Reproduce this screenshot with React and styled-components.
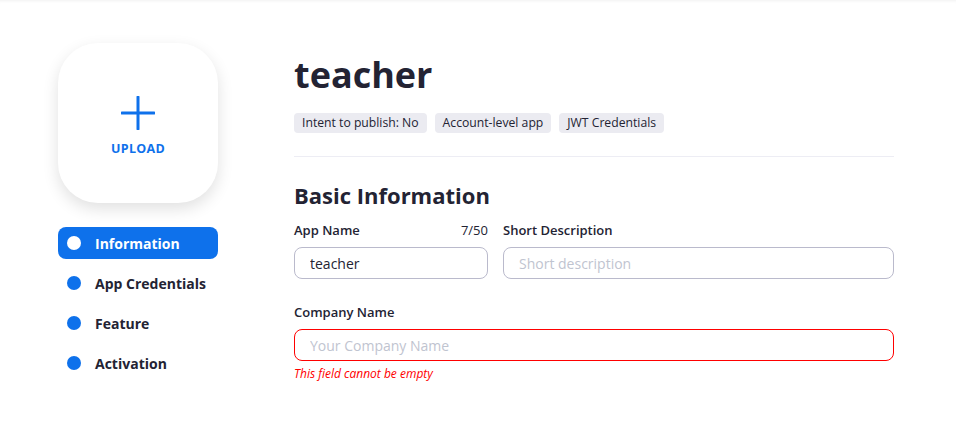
import React from 'react'
import styled, { createGlobalStyle } from 'styled-components'

const GlobalStyle = createGlobalStyle`
    body {
        margin:0;
        background:#fff;
        font-family:"Open Sans", "Liberation Sans", sans-serif;
        color:#232333;
    }
`

const Page = styled.div`
    min-height:422px;
    box-shadow: inset 0 3px 3px -2px rgba(0,0,0,0.06);
    display:flex;
    padding:43px 0 0 58px;
    box-sizing:border-box;
`

const Sidebar = styled.div`
    width:160px;
    display:flex;
    flex-direction:column;
`

const UploadCard = styled.div`
    width:160px;
    height:160px;
    border-radius:40px;
    background:#fff;
    box-shadow:0 6px 16px rgba(0,0,0,0.12);
    display:flex;
    flex-direction:column;
    align-items:center;
    justify-content:center;
    gap:10px;
    padding-top:6px;
    box-sizing:border-box;
    color:#0e71eb;
    cursor:pointer;
`

const UploadText = styled.span`
    font-size:12.5px;
    font-weight:700;
    letter-spacing:0.3px;
`

const Nav = styled.ul`
    list-style:none;
    margin:24px 0 0;
    padding:0;
    display:flex;
    flex-direction:column;
    gap:8px;
`

const NavItem = styled.li`
    height:32px;
    border-radius:8px;
    display:flex;
    align-items:center;
    gap:14px;
    padding-left:9px;
    font-size:14px;
    font-weight:700;
    background:${p => (p.active ? '#0e71eb' : 'transparent')};
    color:${p => (p.active ? '#fff' : '#232333')};
`

const Dot = styled.span`
    width:14px;
    height:14px;
    border-radius:50%;
    background:${p => (p.active ? '#fff' : '#0e71eb')};
`

const Main = styled.div`
    width:600px;
    margin-left:76px;
`

const Title = styled.h1`
    margin:8px 0 0;
    font-size:36px;
    font-weight:700;
    line-height:48px;
    color:#232333;
`

const Tags = styled.div`
    display:flex;
    gap:8px;
    margin-top:14px;
    padding-bottom:23px;
    border-bottom:1px solid #ededf4;
`

const Tag = styled.span`
    background:#ebebf1;
    border-radius:4px;
    padding:0 8px;
    height:20px;
    line-height:20px;
    font-size:12.2px;
    color:#232333;
`

const SectionTitle = styled.h2`
    margin:23px 0 0;
    font-size:22px;
    font-weight:700;
    line-height:30px;
`

const Row = styled.div`
    display:flex;
    gap:15px;
    margin-top:${p => p.top || 0}px;
`

const Field = styled.div`
    display:flex;
    flex-direction:column;
    width:${p => p.width || 'auto'};
    flex:${p => (p.width ? 'none' : 1)};
`

const LabelRow = styled.div`
    display:flex;
    justify-content:space-between;
    font-size:13px;
    font-weight:600;
    line-height:18px;
    margin-bottom:8px;
`

const Counter = styled.span`
    font-weight:400;
`

const Input = styled.input`
    box-sizing:border-box;
    height:32px;
    width:100%;
    border-radius:8px;
    border:1px solid ${p => (p.error ? '#f00' : '#babacc')};
    padding:0 15px;
    font-family:inherit;
    font-size:14px;
    color:#232333;
    outline:none;
    &::placeholder {
        color:#bfc4d0;
    }
`

const ErrorText = styled.span`
    margin-top:4px;
    font-size:12px;
    font-style:italic;
    color:#f00;
`

const PlusIcon = () => (
    <svg width="34" height="34" viewBox="0 0 34 34">
        <path d="M17 1v32M1 17h32" stroke="currentColor" strokeWidth="3" strokeLinecap="round" />
    </svg>
)

const App = () => {
    const nav = ['Information', 'App Credentials', 'Feature', 'Activation']
    return (
        <>
            <GlobalStyle />
            <Page>
                <Sidebar>
                    <UploadCard>
                        <PlusIcon />
                        <UploadText>UPLOAD</UploadText>
                    </UploadCard>
                    <Nav>
                        {nav.map((n, i) => (
                            <NavItem key={n} active={i === 0}>
                                <Dot active={i === 0} />
                                {n}
                            </NavItem>
                        ))}
                    </Nav>
                </Sidebar>
                <Main>
                    <Title>teacher</Title>
                    <Tags>
                        <Tag>Intent to publish: No</Tag>
                        <Tag>Account-level app</Tag>
                        <Tag>JWT Credentials</Tag>
                    </Tags>
                    <SectionTitle>Basic Information</SectionTitle>
                    <Row top={11}>
                        <Field width="194px">
                            <LabelRow>
                                <span>App Name</span>
                                <Counter>7/50</Counter>
                            </LabelRow>
                            <Input defaultValue="teacher" />
                        </Field>
                        <Field>
                            <LabelRow>
                                <span>Short Description</span>
                            </LabelRow>
                            <Input placeholder="Short description" />
                        </Field>
                    </Row>
                    <Row top={24}>
                        <Field>
                            <LabelRow>
                                <span>Company Name</span>
                            </LabelRow>
                            <Input error placeholder="Your Company Name" />
                            <ErrorText>This field cannot be empty</ErrorText>
                        </Field>
                    </Row>
                </Main>
            </Page>
        </>
    )
}

export default App
